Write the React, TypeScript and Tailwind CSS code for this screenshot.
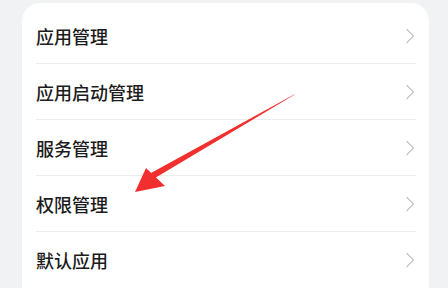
import React from "react";

const items = ["应用管理", "应用启动管理", "服务管理", "权限管理", "默认应用"];

const Chevron = () => (
  <svg width="10" height="16" viewBox="0 0 10 16" fill="none">
    <path
      d="M2 1.5 L8.5 8 L2 14.5"
      stroke="#c6c6c8"
      strokeWidth="1.4"
      strokeLinecap="round"
      strokeLinejoin="round"
    />
  </svg>
);

export default function App() {
  return (
    <div
      className="relative h-[288px] w-[448px] overflow-hidden bg-[#f1f2f4]"
      style={{ fontFamily: '"Noto Sans CJK SC", "Noto Sans", sans-serif' }}
    >
      <div className="ml-[22px] mt-[3px] w-[407px] rounded-[18px] bg-white pt-[5px] pl-[14px] pr-[13px] pb-4">
        {items.map((label, i) => (
          <div
            key={label}
            className={`flex h-[56px] items-center justify-between ${
              i < items.length - 1 ? "border-b border-[#ececec]" : ""
            }`}
          >
            <span className="text-[18px] font-medium text-[#1c1c1c] leading-none">
              {label}
            </span>
            <span className="mr-[1px]">
              <Chevron />
            </span>
          </div>
        ))}
      </div>

      {/* red annotation arrow */}
      <svg
        className="pointer-events-none absolute left-0 top-0"
        width="448"
        height="288"
        viewBox="0 0 448 288"
      >
        <polygon
          points="294,95 155,178 151,173 295,94"
          fill="#f22f2f"
        />
        <polygon
          points="135,192 146,168 165,186"
          fill="#f22f2f"
        />
      </svg>
    </div>
  );
}
